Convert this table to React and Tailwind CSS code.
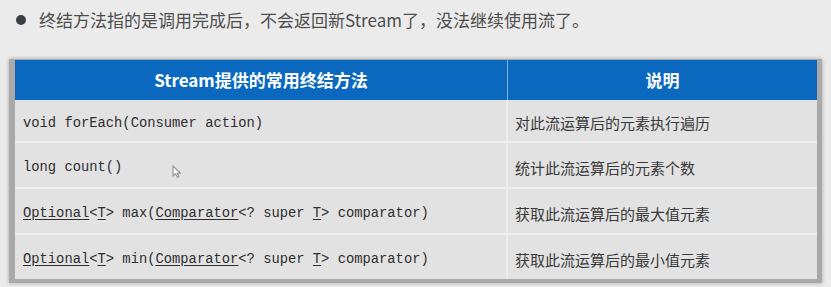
import React from 'react';

const rows = [
  {
    sig: <>void forEach(Consumer action)</>,
    desc: '对此流运算后的元素执行遍历',
    h: 'h-[41px]',
  },
  {
    sig: <>long count()</>,
    desc: '统计此流运算后的元素个数',
    h: 'h-[46px]',
  },
  {
    sig: (
      <>
        <span className="underline underline-offset-2">Optional</span>&lt;<span className="underline underline-offset-2">T</span>&gt; max(<span className="underline underline-offset-2">Comparator</span>&lt;? super <span className="underline underline-offset-2">T</span>&gt; comparator)
      </>
    ),
    desc: '获取此流运算后的最大值元素',
    h: 'h-[46px]',
  },
  {
    sig: (
      <>
        <span className="underline underline-offset-2">Optional</span>&lt;<span className="underline underline-offset-2">T</span>&gt; min(<span className="underline underline-offset-2">Comparator</span>&lt;? super <span className="underline underline-offset-2">T</span>&gt; comparator)
      </>
    ),
    desc: '获取此流运算后的最小值元素',
    h: 'h-[46px]',
  },
];

const cjk = "font-['Noto_Sans_CJK_SC','Noto_Sans',sans-serif]";

const App = () => {
  return (
    <div className="w-[831px] h-[287px] bg-[#ebebeb] overflow-hidden relative">
      {/* Bullet line */}
      <div className={`flex items-center pl-[16px] pt-[8px] h-[32px] ${cjk}`}>
        <span className="w-[10px] h-[10px] rounded-full bg-[#3a3f42] shrink-0" />
        <span className="ml-[13px] text-[17px] leading-[24px] text-[#4d4d4d]">
          终结方法指的是调用完成后，不会返回新Stream了，没法继续使用流了。
        </span>
      </div>

      {/* Table */}
      <div className="mt-[27px] ml-[9px] w-[813px] border-l-[6px] border-r-[5px] border-b-[4px] border-t border-[#a9a9a9] shadow-[0_0_4px_rgba(0,0,0,0.3)]">
        <div className={`flex h-[40px] bg-[#0a69bf] text-white font-bold text-[17px] ${cjk}`}>
          <div className="w-[493px] flex items-center justify-center border-r border-[#7fb0dc]">
            Stream提供的常用终结方法
          </div>
          <div className="flex-1 flex items-center justify-center">说明</div>
        </div>
        {rows.map((r, i) => (
          <div
            key={i}
            className={`flex ${r.h} bg-[#e2e2e2] ${i > 0 ? 'border-t-2 border-[#efefef]' : ''}`}
          >
            <div className="w-[493px] flex items-center pl-[8px] pt-[7px] border-r-2 border-[#ececec] font-['Liberation_Mono',monospace] text-[13.8px] text-[#2e2e2e]">
              <span className="whitespace-pre">{r.sig}</span>
            </div>
            <div className={`flex-1 flex items-center pl-[7px] pt-[6px] text-[15px] text-[#3a3a3a] ${cjk}`}>
              {r.desc}
            </div>
          </div>
        ))}
      </div>

      {/* Mouse cursor */}
      <svg
        className="absolute left-[172px] top-[165px]"
        width="10"
        height="14"
        viewBox="0 0 10 14"
      >
        <path d="M1 1 L1 11 L3.5 8.8 L5.5 12.5 L7 11.8 L5.2 8.2 L8.6 8.2 Z" fill="#f4f4f4" stroke="#9a9a9a" strokeWidth="1.2" strokeLinejoin="round" />
      </svg>
    </div>
  );
};

export default App;
